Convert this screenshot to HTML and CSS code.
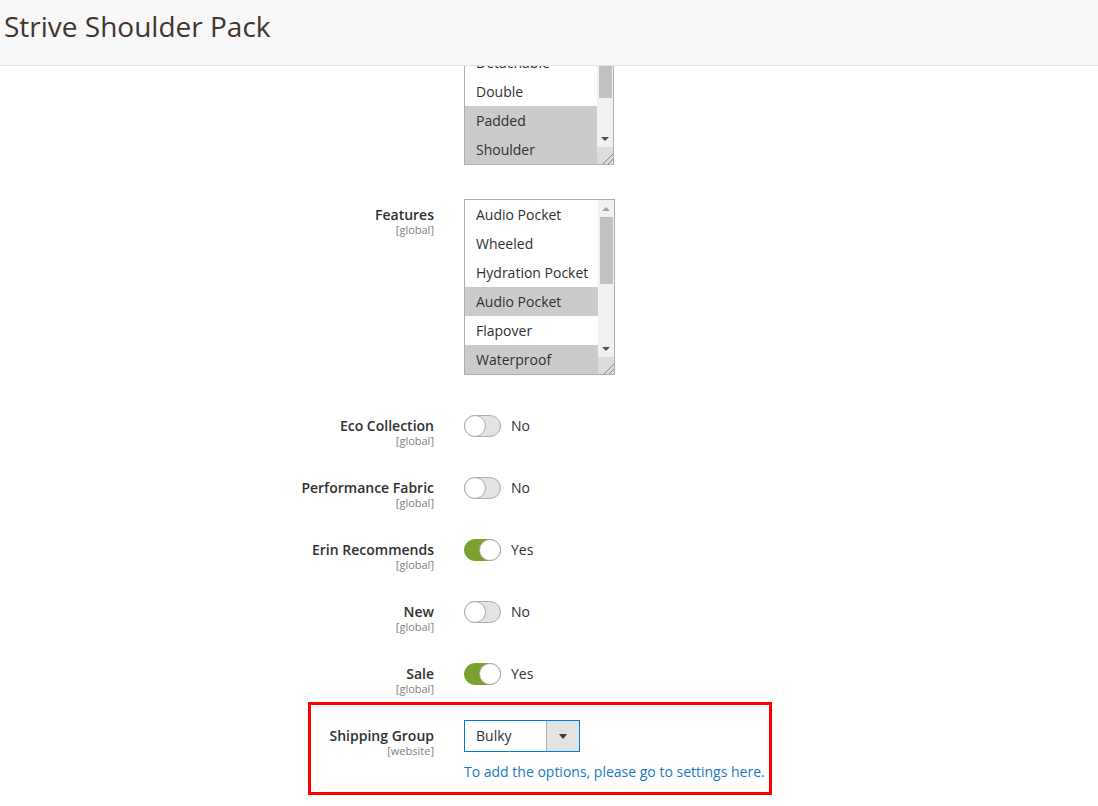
FILE: index.html
```html
<!DOCTYPE html>
<html lang="en">

<head>
    <meta charset="UTF-8">
    <meta name="viewport" content="width=device-width, initial-scale=1.0">
    <title>Strive Shoulder Pack</title>
    <link rel="stylesheet" href="styles.css">
</head>

<body>
    <header class="page-header">
        <h1 class="page-title">Strive Shoulder Pack</h1>
    </header>

    <div class="form">
        <!-- Strap/Handle list, scrolled half under the header -->
        <div class="field field-top">
            <div class="field-label"></div>
            <div class="listbox listbox-short">
                <div class="options">
                    <div class="option">Detachable</div>
                    <div class="option">Double</div>
                    <div class="option selected">Padded</div>
                    <div class="option selected">Shoulder</div>
                </div>
                <div class="scrollbar">
                    <span class="arrow-up"></span>
                    <span class="thumb thumb-short"></span>
                    <span class="track-fill"></span>
                    <span class="arrow-down"></span>
                    <span class="corner"></span>
                </div>
            </div>
        </div>

        <div class="field field-features">
            <div class="field-label">
                <span class="label-text">Features</span>
                <span class="scope">[global]</span>
            </div>
            <div class="listbox listbox-wide">
                <div class="options">
                    <div class="option">Audio Pocket</div>
                    <div class="option">Wheeled</div>
                    <div class="option">Hydration Pocket</div>
                    <div class="option selected">Audio Pocket</div>
                    <div class="option">Flapover</div>
                    <div class="option selected">Waterproof</div>
                </div>
                <div class="scrollbar">
                    <span class="arrow-up"></span>
                    <span class="thumb"></span>
                    <span class="track-fill"></span>
                    <span class="arrow-down"></span>
                    <span class="corner"></span>
                </div>
            </div>
        </div>

        <div class="field field-switch">
            <div class="field-label">
                <span class="label-text">Eco Collection</span>
                <span class="scope">[global]</span>
            </div>
            <div class="switch-wrap">
                <span class="switch"><span class="knob"></span></span>
                <span class="switch-text">No</span>
            </div>
        </div>

        <div class="field field-switch">
            <div class="field-label">
                <span class="label-text">Performance Fabric</span>
                <span class="scope">[global]</span>
            </div>
            <div class="switch-wrap">
                <span class="switch"><span class="knob"></span></span>
                <span class="switch-text">No</span>
            </div>
        </div>

        <div class="field field-switch">
            <div class="field-label">
                <span class="label-text">Erin Recommends</span>
                <span class="scope">[global]</span>
            </div>
            <div class="switch-wrap">
                <span class="switch on"><span class="knob"></span></span>
                <span class="switch-text">Yes</span>
            </div>
        </div>

        <div class="field field-switch">
            <div class="field-label">
                <span class="label-text">New</span>
                <span class="scope">[global]</span>
            </div>
            <div class="switch-wrap">
                <span class="switch"><span class="knob"></span></span>
                <span class="switch-text">No</span>
            </div>
        </div>

        <div class="field field-switch field-last">
            <div class="field-label">
                <span class="label-text">Sale</span>
                <span class="scope">[global]</span>
            </div>
            <div class="switch-wrap">
                <span class="switch on"><span class="knob"></span></span>
                <span class="switch-text">Yes</span>
            </div>
        </div>

        <div class="callout">
            <div class="field field-select">
                <div class="field-label">
                    <span class="label-text">Shipping Group</span>
                    <span class="scope">[website]</span>
                </div>
                <div class="control">
                    <div class="select">
                        <span class="select-value">Bulky</span>
                        <span class="select-btn"><span class="caret"></span></span>
                    </div>
                    <a class="note-link" href="#">To add the options, please go to settings here.</a>
                </div>
            </div>
        </div>
    </div>
</body>

</html>
```

FILE: styles.css
```css
* {
    padding: 0;
    margin: 0;
    box-sizing: border-box;
}

body {
    background: #fff;
    color: #303030;
    font-family: "Open Sans", "Noto Sans", sans-serif;
    font-size: 14px;
    overflow: hidden;
}

.page-header {
    position: relative;
    z-index: 2;
    height: 66px;
    background: #f8f8f8;
    border-bottom: 1px solid #e3e3e3;
}

.page-title {
    padding: 7px 0 0 4px;
    font-size: 28px;
    line-height: 38px;
    font-weight: 400;
    color: #41362f;
}

.form {
    display: flex;
    flex-direction: column;
    margin-top: -19px;
}

.field {
    display: grid;
    grid-template-columns: 434px auto;
    column-gap: 30px;
    align-items: start;
    margin-bottom: 29px;
}

.field-top {
    margin-bottom: 34px;
}

.field-features {
    margin-bottom: 40px;
}

.field-last {
    margin-bottom: 6px;
}

.field-label {
    display: flex;
    flex-direction: column;
    align-items: flex-end;
    padding-top: 7px;
    text-align: right;
}

.field-switch .field-label {
    padding-top: 2px;
}

.label-text {
    font-size: 14px;
    line-height: 18px;
    font-weight: 600;
    color: #303030;
}

.scope {
    padding-bottom: 2px;
    font-size: 11px;
    line-height: 11px;
    color: #808080;
}

/* multiselect boxes */
.listbox {
    display: flex;
    border: 1px solid #adadad;
    background: #fff;
}

.listbox-short {
    width: 150px;
    height: 118px;
}

.listbox-wide {
    width: 151px;
    height: 176px;
}

.options {
    flex: 1;
}

.option {
    height: 29px;
    line-height: 29px;
    padding-left: 11px;
    font-size: 14px;
    color: #303030;
    white-space: nowrap;
}

.option.selected {
    background: #cbcbcb;
}

.scrollbar {
    display: flex;
    flex-direction: column;
    width: 16px;
    background: #f1f1f1;
}

.arrow-up,
.arrow-down {
    display: flex;
    justify-content: center;
    align-items: center;
    height: 17px;
}

.arrow-up::before {
    content: "";
    border-left: 4px solid transparent;
    border-right: 4px solid transparent;
    border-bottom: 4px solid #a3a3a3;
}

.arrow-down::before {
    content: "";
    border-left: 4px solid transparent;
    border-right: 4px solid transparent;
    border-top: 4px solid #505050;
}

.thumb {
    height: 67px;
    margin: 0 1px 0 2px;
    background: #c1c1c1;
}

.thumb-short {
    height: 33px;
}

.track-fill {
    flex: 1;
}

.corner {
    height: 17px;
    background: #dcdcdc linear-gradient(135deg, transparent 68%, #8a8a8a 68%, #8a8a8a 72%, transparent 72%, transparent 82%, #8a8a8a 82%, #8a8a8a 86%, transparent 86%);
}

/* toggles */
.switch-wrap {
    display: flex;
    align-items: center;
    gap: 10px;
    height: 22px;
}

.switch {
    display: flex;
    justify-content: flex-start;
    width: 37px;
    height: 22px;
    border: 1px solid #adadad;
    border-radius: 11px;
    background: #e3e3e3;
}

.switch.on {
    justify-content: flex-end;
    background: #79a22e;
    border-color: #79a22e;
}

.knob {
    width: 22px;
    height: 22px;
    margin: -1px;
    border: 1px solid #adadad;
    border-radius: 50%;
    background: #fff;
}

.switch-text {
    padding-bottom: 2px;
    font-size: 14px;
    color: #303030;
}

/* shipping group */
.callout {
    margin-left: 308px;
    width: 464px;
    padding: 15px 0 11px;
    border: 3px solid #f00;
}

.callout .field {
    grid-template-columns: 123px auto;
    margin-bottom: 0;
}

.control {
    display: flex;
    flex-direction: column;
}

.select {
    display: flex;
    width: 116px;
    height: 32px;
    border: 1px solid #007bdb;
    background: #fff;
}

.select-value {
    flex: 1;
    padding-left: 11px;
    line-height: 30px;
    font-size: 14px;
    color: #303030;
}

.select-btn {
    display: flex;
    justify-content: center;
    align-items: center;
    width: 33px;
    border-left: 1px solid #adadad;
    background: #e3e3e3;
}

.caret {
    border-left: 4px solid transparent;
    border-right: 4px solid transparent;
    border-top: 5px solid #41362f;
}

.note-link {
    margin-top: 11px;
    font-size: 14px;
    line-height: 18px;
    color: #1979c3;
    text-decoration: none;
}
```
